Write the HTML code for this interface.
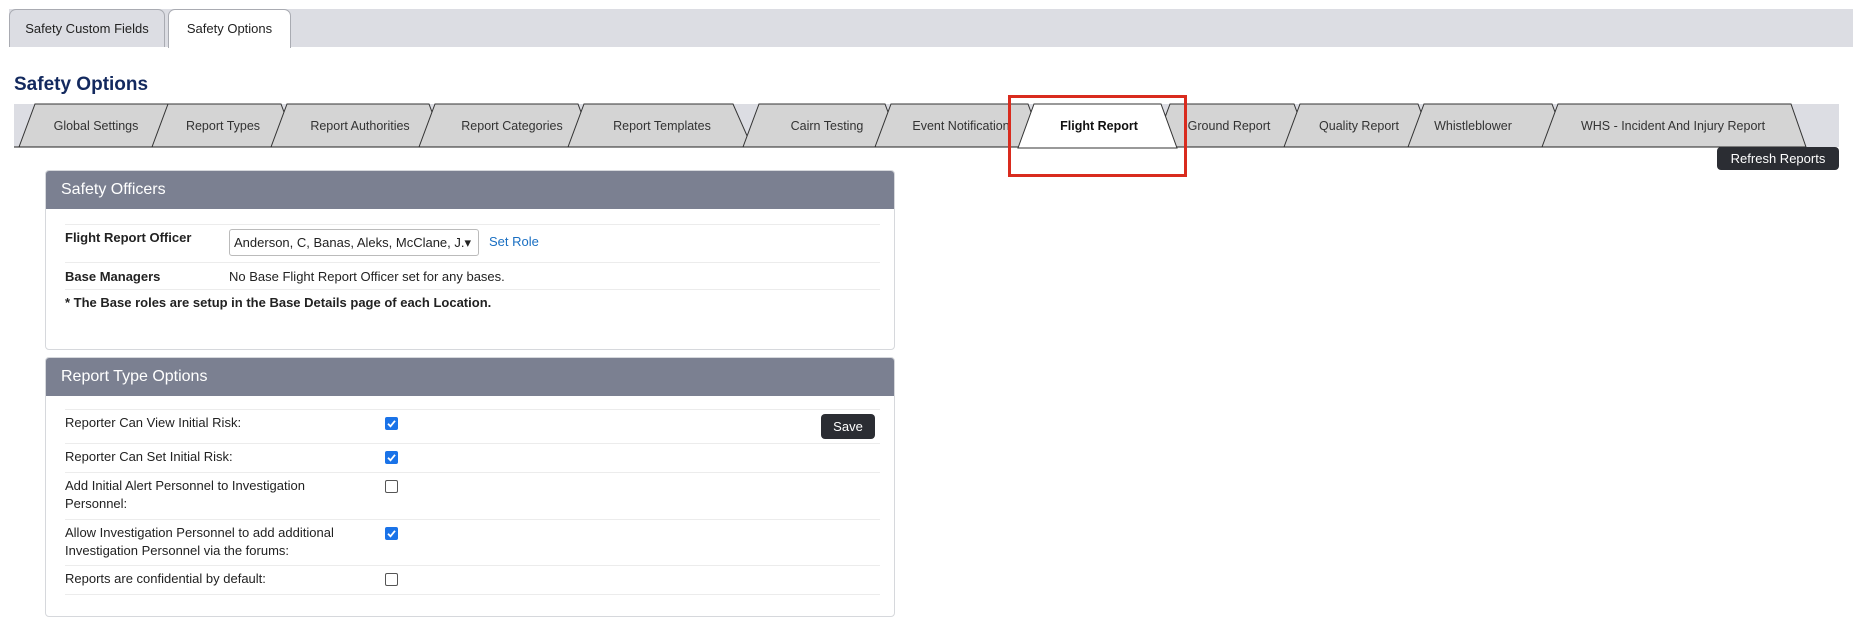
<!DOCTYPE html>
<html><head><meta charset="utf-8"><style>
body{margin:0;width:1853px;height:599px;overflow:hidden;background:#fff;font-family:"Liberation Sans",sans-serif;color:#222;position:relative}
.a{position:absolute}
.topbar{left:9px;top:9px;width:1844px;height:38px;background:#dcdde3}
.ttab{top:9px;height:38px;border:1px solid #a9abb2;border-bottom:none;border-radius:7px 7px 0 0;font-size:13px;line-height:38px;text-align:center;box-sizing:border-box}
.panel{left:45px;width:850px;border:1px solid #d6d8dc;border-radius:4px;box-sizing:border-box;overflow:hidden}
.ph{height:38px;background:#7b8091;color:#fff;font-size:16px;line-height:38px;padding-left:15px}
.ln{left:65px;width:815px;height:1px;background:#ececec}
.t{font-size:13px;line-height:18px}
.b{font-weight:bold}
.cb{width:13px;height:13px;border-radius:2px;box-sizing:border-box}
.on{background:#1a73e8}
.off{border:1px solid #555;background:#fff}
.cb svg{display:block}
</style></head><body>
<div class="a topbar"></div>
<div class="a ttab" style="left:9px;width:156px;background:#dcdde3">Safety Custom Fields</div>
<div class="a ttab" style="left:168px;width:123px;background:#fff;height:39px">Safety Options</div>
<div class="a" style="left:14px;top:74px;font-size:19px;font-weight:bold;color:#13295e">Safety Options</div>

<svg class="a" style="left:0;top:0" width="1853" height="180">
<rect x="14" y="104" width="1825" height="43" fill="#dcdde3"/>
<g fill="#d4d4d4" stroke="#333" stroke-width="1" font-family="Liberation Sans,sans-serif" font-size="12.5" text-anchor="middle">
<polygon points="19,147 35,104 276,104 292,147"/>
<polygon points="152,147 168,104 281,104 297,147"/>
<polygon points="271,147 287,104 429,104 445,147"/>
<polygon points="419,147 435,104 578,104 594,147"/>
<polygon points="568,147 584,104 733,104 752,147"/>
<polygon points="743,147 759,104 885,104 901,147"/>
<polygon points="875,147 891,104 1028,104 1044,147"/>
<polygon points="1154,147 1170,104 1294,104 1310,147"/>
<polygon points="1284,147 1300,104 1418,104 1434,147"/>
<polygon points="1408,147 1424,104 1552,104 1568,147"/>
<polygon points="1542,147 1558,104 1791,104 1806,147"/>
<line x1="14" y1="147" x2="1806" y2="147" stroke="#222"/>
<polygon points="1018,148 1034,104 1161,104 1177,148" fill="#fff"/>
<g stroke="none" fill="#333">
<text x="96" y="130">Global Settings</text>
<text x="223" y="130">Report Types</text>
<text x="360" y="130">Report Authorities</text>
<text x="512" y="130">Report Categories</text>
<text x="662" y="130">Report Templates</text>
<text x="827" y="130">Cairn Testing</text>
<text x="961" y="130">Event Notification</text>
<text x="1099" y="130" font-weight="bold" fill="#111">Flight Report</text>
<text x="1229" y="130">Ground Report</text>
<text x="1359" y="130">Quality Report</text>
<text x="1473" y="130">Whistleblower</text>
<text x="1673" y="130">WHS - Incident And Injury Report</text>
</g></g>
<rect x="1009.5" y="96.5" width="176" height="79" fill="none" stroke="#d92b1e" stroke-width="3"/>
</svg>
<div class="a" style="left:1717px;top:147px;width:122px;height:23px;background:#2b2d33;border-radius:4px;color:#fff;font-size:13px;line-height:23px;text-align:center">Refresh Reports</div>

<div class="a panel" style="top:170px;height:180px"><div class="ph">Safety Officers</div></div>
<div class="a ln" style="top:224px"></div>
<div class="a t b" style="left:65px;top:229px">Flight Report Officer</div>
<div class="a" style="left:229px;top:229px;width:250px;height:27px;border:1px solid #bbb;border-radius:3px;box-sizing:border-box;font-size:13px;line-height:25px;padding-left:4px;white-space:nowrap;overflow:hidden">Anderson, C, Banas, Aleks, McClane, J.▾</div>
<div class="a t" style="left:489px;top:233px;color:#1a6fc2">Set Role</div>
<div class="a ln" style="top:262px"></div>
<div class="a t b" style="left:65px;top:268px">Base Managers</div>
<div class="a t" style="left:229px;top:268px">No Base Flight Report Officer set for any bases.</div>
<div class="a ln" style="top:289px"></div>
<div class="a t b" style="left:65px;top:294px">* The Base roles are setup in the Base Details page of each Location.</div>

<div class="a panel" style="top:357px;height:260px"><div class="ph">Report Type Options</div></div>
<div class="a ln" style="top:409px"></div>
<div class="a t" style="left:65px;top:414px">Reporter Can View Initial Risk:</div>
<div class="a cb on" style="left:385px;top:417px"><svg width="13" height="13"><path d="M3 6.8 L5.5 9.3 L10 3.8" fill="none" stroke="#fff" stroke-width="1.8"/></svg></div>
<div class="a" style="left:821px;top:414px;width:54px;height:25px;background:#2b2d33;border-radius:4px;color:#fff;font-size:13px;line-height:25px;text-align:center">Save</div>
<div class="a ln" style="top:443px"></div>
<div class="a t" style="left:65px;top:448px">Reporter Can Set Initial Risk:</div>
<div class="a cb on" style="left:385px;top:451px"><svg width="13" height="13"><path d="M3 6.8 L5.5 9.3 L10 3.8" fill="none" stroke="#fff" stroke-width="1.8"/></svg></div>
<div class="a ln" style="top:472px"></div>
<div class="a t" style="left:65px;top:477px;width:300px">Add Initial Alert Personnel to Investigation Personnel:</div>
<div class="a cb off" style="left:385px;top:480px"></div>
<div class="a ln" style="top:519px"></div>
<div class="a t" style="left:65px;top:524px;width:300px">Allow Investigation Personnel to add additional Investigation Personnel via the forums:</div>
<div class="a cb on" style="left:385px;top:527px"><svg width="13" height="13"><path d="M3 6.8 L5.5 9.3 L10 3.8" fill="none" stroke="#fff" stroke-width="1.8"/></svg></div>
<div class="a ln" style="top:565px"></div>
<div class="a t" style="left:65px;top:570px">Reports are confidential by default:</div>
<div class="a cb off" style="left:385px;top:573px"></div>
<div class="a ln" style="top:594px"></div>
</body></html>
